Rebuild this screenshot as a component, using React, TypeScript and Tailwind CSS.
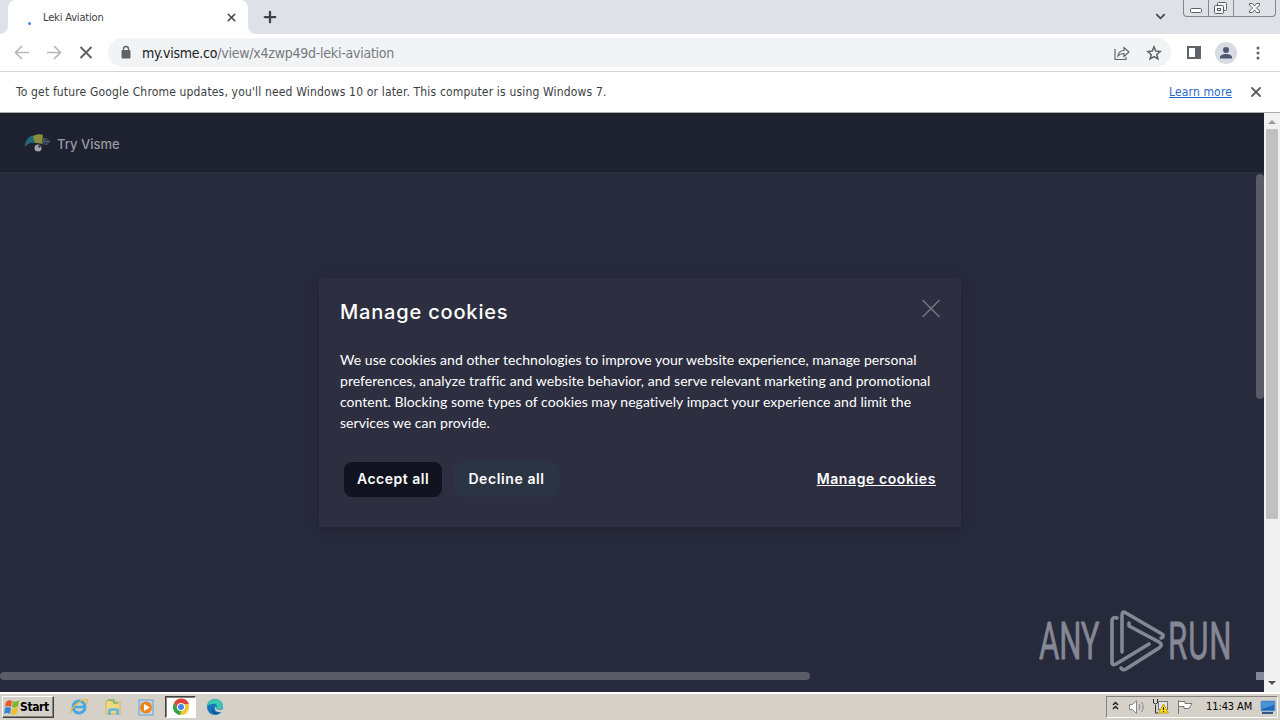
import { ChevronDown, Plus, X } from "lucide-react";

function TabStrip() {
  return (
    <div className="flex h-[34px] shrink-0 bg-[#dee1e6]">
      <div className="w-2 bg-white">
        <div className="h-full rounded-br-lg bg-[#dee1e6]" />
      </div>
      <div className="flex w-60 items-center rounded-t-lg bg-white pr-2.5">
        <span className="mt-3 ml-5 size-[3px] rounded-full bg-[#4a8be0]" />
        <span className="mt-0.5 ml-3 flex-1 text-[11px] tracking-[-0.17px] text-[#3c4043]">Leki Aviation</span>
        <X size={13} strokeWidth={3} className="text-[#45484d]" />
      </div>
      <div className="w-2 bg-white">
        <div className="h-full rounded-bl-lg bg-[#dee1e6]" />
      </div>
      <Plus size={18} strokeWidth={3} className="mt-2 ml-[5px] text-[#3f4247]" />
      <div className="flex-1" />
      <ChevronDown size={15} strokeWidth={3} className="mt-[9px] mr-[15px] text-[#4a4d52]" />
      <div className="mr-1 flex h-[17px] w-[93px] rounded-b border border-t-0 border-[#83878f]">
        <div className="w-[25px] border-r border-[#83878f]">
          <svg width="24" height="16" fill="#fff" stroke="#5b5f66">
            <rect x="6.500" y="8.500" width="11" height="4" rx="1" />
          </svg>
        </div>
        <div className="w-[25px] border-r border-[#83878f]">
          <svg width="24" height="16" fill="#f4f5f7" stroke="#5b5f66">
            <rect x="8.500" y="2.500" width="9" height="8" rx="1" />
            <rect x="5.500" y="5.500" width="9" height="8" rx="1" />
            <rect x="8.500" y="8.500" width="3" height="2" />
          </svg>
        </div>
        <svg width="41" height="16" fill="#fff" stroke="#5b5f66">
          <path d="M15.500 3.500h3l2 2.500 2-2.500h3v1.500l-3 3 3 3v1.500h-3l-2-2.500-2 2.500h-3v-1.500l3-3-3-3z" />
        </svg>
      </div>
    </div>
  );
}

function Toolbar() {
  return (
    <div className="flex h-[38px] shrink-0 items-center border-b border-[#d3d5d8] bg-white">
      <svg width="108" height="36" fill="none" stroke="#b5b7b9" strokeWidth="1.700">
        <path d="M29 17.500H16M22 11 15.500 17.500 22 24M47 17.500h13M54 11 60.500 17.500 54 24" />
        <path d="M80.500 12l11 11M91.500 12l-11 11" stroke="#5f6368" strokeWidth="2" />
      </svg>
      <div className="flex h-[29px] w-[1063px] items-center rounded-full bg-[#f1f3f4] pl-3">
        <svg width="12" height="15" fill="#5f6368">
          <rect x="1.500" y="5" width="9" height="8.500" rx="1" />
          <path d="M3.500 6V4a2.500 2.500 0 0 1 5 0v2" fill="none" stroke="#5f6368" strokeWidth="1.300" />
        </svg>
        <span className="mt-px ml-2.5 flex-1 text-[14px] tracking-[-0.24px] text-[#767a7f]">
          <span className="text-[#202124]">my.visme.co</span>/view/x4zwp49d-leki-aviation
        </span>
        <svg width="16" height="16" fill="none" stroke="#5f6368" strokeWidth="1.200">
          <path d="M1 4v10.500h11V12M4 11c.5-4 3-5.500 6-5.500V2.500L15 7l-5 4.500v-3C7.500 8.500 5.500 9 4 11z" />
        </svg>
        <svg width="16" height="16" className="mr-[9px] ml-4" fill="none" stroke="#5f6368" strokeWidth="1.500">
          <path d="M8 1.800l1.700 4.300 4.600.4-3.500 3 1.100 4.500L8 11.600 4.100 14l1.100-4.500-3.500-3 4.600-.4z" />
        </svg>
      </div>
      <svg width="16" height="15" className="ml-[15px]" fill="#5f6368">
        <path d="M1 1h14v13H1zM3 3v9h6V3z" fillRule="evenodd" />
      </svg>
      <div className="ml-[13px] flex size-[22px] items-center justify-center rounded-full bg-[#d8dce2]">
        <svg width="14" height="14" fill="#4f5a72">
          <circle cx="7" cy="4" r="3" />
          <path d="M1 12.500V11c0-2 3.500-3 6-3s6 1 6 3v1.500z" />
        </svg>
      </div>
      <svg width="4" height="16" className="ml-[19px]" fill="#5f6368">
        <circle cx="2" cy="3" r="1.500" />
        <circle cx="2" cy="8" r="1.500" />
        <circle cx="2" cy="13" r="1.500" />
      </svg>
    </div>
  );
}

function InfoBar() {
  return (
    <div className="flex h-[41px] shrink-0 items-center border-b border-[#aaacae] bg-white pr-4 pl-4 text-[12px] text-[#3c4043]">
      <span className="flex-1 tracking-[0.165px]">
        To get future Google Chrome updates, you'll need Windows 10 or later. This computer is using Windows 7.
      </span>
      <a className="tracking-[0.15px] text-[#2a68c8] underline">Learn more</a>
      <X size={16} strokeWidth={2.8} className="ml-4 text-[#5f6368]" />
    </div>
  );
}

function CookieDialog() {
  return (
    <div className="absolute top-[165px] left-[319px] h-[249px] w-[642px] rounded bg-[#2d2f40] px-[21px] text-white shadow-[0_2px_8px_#202332]">
      <div className="flex justify-between">
        <h1 className="mt-5 font-['Inter'] text-[20px] leading-[28px] font-medium tracking-[0.82px]">
          Manage cookies
        </h1>
        <svg width="20" height="20" className="mt-5 -mr-px" stroke="#737582" strokeWidth="1.500">
          <path d="M1.500 2l17 17M18.500 2l-17 17" />
        </svg>
      </div>
      <p className="mt-[23px] font-['Lato'] text-[14px] leading-[21px] tracking-[0.04px] whitespace-nowrap">
        We use cookies and other technologies to improve your website experience, manage personal
        <br />
        preferences, analyze traffic and website behavior, and serve relevant marketing and promotional
        <br />
        content. Blocking some types of cookies may negatively impact your experience and limit the
        <br />
        services we can provide.
      </p>
      <div className="mt-[29px] flex items-center px-1 font-['Inter'] text-[14px] font-semibold">
        <button className="h-[35px] w-[98px] rounded-lg bg-[#111420] pb-0.5 tracking-[0.5px]">Accept all</button>
        <button className="ml-3 h-[35px] w-[105px] rounded-lg bg-[#2b3443] pb-0.5 tracking-[0.6px]">Decline all</button>
        <a className="ml-auto pb-0.5 tracking-[0.6px] underline">Manage cookies</a>
      </div>
    </div>
  );
}

function Watermark() {
  return (
    <svg
      className="absolute top-[490px] left-[1030px]"
      width="210"
      height="76"
      fill="none"
      stroke="#8f929e"
      strokeWidth="3.600"
      strokeLinecap="round"
      strokeLinejoin="round"
      opacity="0.9"
    >
      <g transform="scale(0.6 1)" fill="#8f929e" strokeWidth="0.800" fontFamily="Roboto" fontSize="52">
        <text x="15" y="56" textLength="101">ANY</text>
        <text x="230" y="56" textLength="106">RUN</text>
      </g>
      <path d="M87 15c-3-1-5 0-5 3v41c0 3 2 3 4 2l33-20M92 49V13c0-4 1-5 4-3l36 21c2 1 1 4-1 4M99 20v3l30 16c3 2 3 4 0 6L96 66c-2 1-4 1-5-1" />
    </svg>
  );
}

function Page() {
  return (
    <main className="relative flex h-[579px] shrink-0 bg-[#272a3a]">
      <div className="flex flex-1 flex-col">
        <header className="flex h-[61px] items-center border-b-2 border-[#2a2d3b] bg-[#1e212f] pl-6">
          <svg width="28" height="22" className="mt-px">
            <path d="M1 13C2 7 6 3 10 4l1 7c-4-1-7 0-10 4z" fill="#24677f" />
            <path d="M9 4c4-2 7-2 10-1l-1 9c-2-1-5-1-7-1z" fill="#8a8e3a" />
            <path d="M19 6c4 0 6 1 7 4l-3 3-5-1z" fill="#4b606b" />
            <path d="M20 8h7M19 11h6" stroke="#1e212f" />
            <circle cx="14" cy="16" r="3.500" fill="#a3a5aa" />
            <circle cx="15.500" cy="14.500" r="1.300" fill="#333746" />
          </svg>
          <span className="mt-1 ml-[5px] font-['Inter'] text-[13px] font-medium text-[#9799a1]">Try Visme</span>
        </header>
        <div className="flex flex-1 flex-col justify-between pb-3">
          <div className="ml-auto h-[225px] w-2 rounded bg-[#5a5c67]" />
          <div className="flex h-2 justify-between">
            <div className="w-[810px] rounded bg-[#5a5c67]" />
            <div className="w-2 bg-[#83859a]" />
          </div>
        </div>
      </div>
      <div className="flex w-4 flex-col items-center bg-[#f1f1f1]">
        <svg width="16" height="16" fill="#9a9a9a">
          <path d="M4 11l4-4 4 4z" />
        </svg>
        <div className="h-[390px] w-3 bg-[#c1c1c1]" />
        <svg width="16" height="16" className="mt-auto" fill="#505050">
          <path d="M4 5l4 4 4-4z" />
        </svg>
      </div>
      <CookieDialog />
      <Watermark />
    </main>
  );
}

function Taskbar() {
  return (
    <footer className="flex h-7 shrink-0 items-center border-t-2 border-white bg-[#d5d1c8] text-black">
      <div className="ml-0.5 flex h-[22px] w-[52px] items-center border border-t-white border-r-[#404040] border-b-[#404040] border-l-white pl-px shadow-[inset_-1px_-1px_#85827a]">
        <svg width="17" height="17">
          <path d="M2 3q3-3 6-1L7 8Q4 6 1 8z" fill="#e85825" />
          <path d="M9 2q3 2 6-1l-1 6q-3 3-6 1z" fill="#78b82a" />
          <path d="M1 9q3-2 6 0l-1 6q-3-2-6 0z" fill="#3486d5" />
          <path d="M8 9q3 2 6-1l-1 6q-3 3-6 1z" fill="#f4bd28" />
        </svg>
        <span className="-ml-px font-['DejaVu_Sans_Condensed'] text-[12px] font-bold tracking-[-0.4px]">Start</span>
      </div>
      <svg width="18" height="18" className="ml-4" fill="none">
        <circle cx="9" cy="9" r="6" stroke="#45a8e1" strokeWidth="3" />
        <path d="M4 9h11" stroke="#45a8e1" strokeWidth="2.500" />
        <path d="M1 15C0 9 13 0 17 2c1 1 0 3-1 4" stroke="#e5ba39" strokeWidth="1.500" />
      </svg>
      <svg width="18" height="18" className="ml-4">
        <path d="M2 3l5-1 1 2h8v12H2z" fill="#f0d982" stroke="#d1b45b" />
        <path d="M4 2h6v3h4" fill="none" stroke="#7fb26a" strokeWidth="1.500" />
        <path d="M4 17v-6q5-2 11 0v6h-3v-4H7v4z" fill="#6bb9dc" />
      </svg>
      <svg width="17" height="17" className="ml-4">
        <rect x="1" y="1" width="14" height="15" fill="#b9d6ef" stroke="#6ca0cf" />
        <circle cx="8" cy="8.500" r="6" fill="#ef8519" />
        <path d="M6 5l6 3.500-6 3.500z" fill="#fff" />
      </svg>
      <div className="ml-2.5 flex h-[22px] w-[31px] items-center justify-center border border-t-[#404040] border-r-white border-b-white border-l-[#404040] bg-white shadow-[inset_1px_1px_#85827a]">
        <svg width="18" height="18">
          <circle cx="9" cy="9" r="8" fill="#f4c52c" />
          <path d="M2.100 5A8 8 0 0 1 16.900 6H9L6 11z" fill="#dd4336" />
          <path d="M2.100 5l4 7L9 13l-1 4A8 8 0 0 1 2.100 5z" fill="#31a354" />
          <circle cx="9" cy="9" r="4" fill="#fff" />
          <circle cx="9" cy="9" r="3" fill="#4285f4" />
        </svg>
      </div>
      <svg width="18" height="18" className="ml-2.5">
        <circle cx="9" cy="9" r="8" fill="#1676bd" />
        <path d="M1 8C2-1 17-1 17 8c0 4-6 4-7 2 2-2 0-5-3-4-3 0-5 1-6 2z" fill="#3dc7b5" />
        <path d="M7 8c-2 5 3 8 8 6-5 5-12 0-8-6z" fill="#154f92" />
        <path d="M10 8c-1 3 2 5 7 3l-1 3c-5 1-9-2-6-6z" fill="#d5d1c8" />
      </svg>
      <div className="ml-auto flex h-[22px] items-center border border-t-[#85827a] border-r-white border-b-white border-l-[#85827a]">
        <svg width="92" height="20" fill="none" stroke="#222">
          <path d="M6 8l2.500-2.500L11 8M6 12l2.500-2.500L11 12" strokeWidth="1.500" />
          <path d="M22.500 7.500h3l4-4v13l-4-4h-3z" fill="#fff" stroke="#85878a" />
          <path d="M32 7q2 3 0 6M34.500 5q3.500 5 0 10" stroke="#85878a" />
          <path d="M46.500 2v4q2 2 4 0V2M48.500 8v8h3" stroke="#333" />
          <rect x="51.500" y="4.500" width="9" height="8" fill="#dfe6eb" stroke="#777" />
          <path d="M56.500 7l5 9h-10z" fill="#f7d61d" stroke="#c3a519" />
          <path d="M56.500 10v3M56.500 14v1" stroke="#222" />
          <path d="M71.500 3v14M72 4.500h6v2h7l-3 5h-5v-2h-5" fill="#fff" stroke="#777" />
        </svg>
        <span className="ml-[7px] w-[49px] font-['DejaVu_Sans_Condensed'] text-[11px] tracking-[-0.1px] whitespace-nowrap">11:43 AM</span>
        <svg width="18" height="18" className="ml-1">
          <path d="M2 3h14v10H2z" fill="#1c65b9" stroke="#76a8d9" />
          <path d="M3 4h12v3L3 11z" fill="#4b91d5" />
          <path d="M3 15h11" stroke="#315681" strokeWidth="2" />
        </svg>
      </div>
      <div className="w-0.5" />
    </footer>
  );
}

export default function App() {
  return (
    <div className="flex h-[720px] w-[1280px] flex-col overflow-hidden font-['DejaVu_Sans_Condensed','Noto_Sans',sans-serif]">
      <TabStrip />
      <Toolbar />
      <InfoBar />
      <Page />
      <Taskbar />
    </div>
  );
}
